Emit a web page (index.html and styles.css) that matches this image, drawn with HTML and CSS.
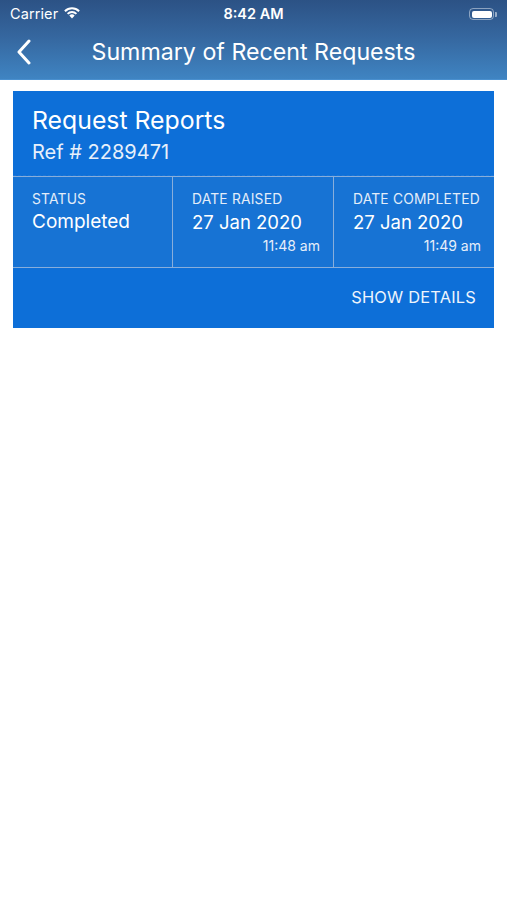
FILE: index.html
```html
<!DOCTYPE html>
<html>
<head>
<meta charset="utf-8">
<link rel="stylesheet" href="styles.css">
</head>
<body>
<header class="topbar">
  <div class="status">
    <div class="carrier">Carrier
      <svg class="wifi" width="18" height="13" viewBox="0 0 18 13"><path d="M9 12.5 L6.3 9.6 A3.8 3.8 0 0 1 11.7 9.6 Z" fill="#fff"/><path d="M3.9 7.2 A7.3 7.3 0 0 1 14.1 7.2 L12.7 8.6 A5.3 5.3 0 0 0 5.3 8.6 Z" fill="#fff"/><path d="M1.2 4.5 A11.2 11.2 0 0 1 16.8 4.5 L15.4 5.9 A9.2 9.2 0 0 0 2.6 5.9 Z" fill="#fff"/></svg>
    </div>
    <div class="time">8:42 AM</div>
    <div class="battery"><span class="batt-body"><span class="batt-fill"></span></span><span class="batt-tip"></span></div>
  </div>
  <div class="nav">
    <svg class="back" width="16" height="26" viewBox="0 0 16 26"><path d="M13 2 L3 13 L13 24" fill="none" stroke="#fff" stroke-width="3" stroke-linecap="round" stroke-linejoin="round"/></svg>
    <h1 class="title">Summary of Recent Requests</h1>
  </div>
</header>
<main class="content">
  <section class="card">
    <div class="card-head">
      <div class="card-title">Request Reports</div>
      <div class="card-ref">Ref # 2289471</div>
    </div>
    <div class="grid">
      <div class="cell">
        <div class="label">STATUS</div>
        <div class="value">Completed</div>
      </div>
      <div class="cell">
        <div class="label">DATE RAISED</div>
        <div class="value date">27 Jan 2020</div>
        <div class="sub">11:48 am</div>
      </div>
      <div class="cell">
        <div class="label">DATE COMPLETED</div>
        <div class="value date">27 Jan 2020</div>
        <div class="sub">11:49 am</div>
      </div>
    </div>
    <div class="card-foot">SHOW DETAILS</div>
  </section>
</main>
</body>
</html>
```
FILE: styles.css
```css
* { box-sizing: border-box; }
html, body { margin: 0; padding: 0; background: #fff; }
body { width: 507px; height: 900px; font-family: Inter, "Liberation Sans", Arial, sans-serif; color: #fff; }
.topbar {
  height: 80px;
  background: linear-gradient(to bottom, #2c5285 0%, #35669e 45%, #3f84c2 100%);
  border-bottom: 1px solid #4a90cf;
}
.status {
  height: 28px;
  display: flex;
  align-items: center;
  justify-content: space-between;
  padding: 0 10px 0 10px;
  position: relative;
}
.carrier { font-size: 14.5px; display: flex; align-items: center; gap: 5px; letter-spacing: 0.1px; margin-top: -1px; }
.wifi { margin-top: -3px; }
.time { font-size: 14.5px; font-weight: 600; position: absolute; left: 0; right: 0; text-align: center; pointer-events: none; margin-top: -1px; }
.battery { display: flex; align-items: center; }
.batt-body { width: 25px; height: 12px; border: 1px solid rgba(255,255,255,0.45); border-radius: 4px; padding: 1.5px; display: flex; }
.batt-fill { flex: 1; background: #fff; border-radius: 2px; }
.batt-tip { width: 2px; height: 5px; background: rgba(255,255,255,0.5); border-radius: 0 1px 1px 0; margin-left: 1px; }
.nav {
  height: 51px;
  display: flex;
  align-items: center;
  padding-left: 16px;
  padding-bottom: 4px;
  position: relative;
}
.title {
  position: absolute; left: 0; right: 0; top: 9px; text-align: center;
  margin: 0; font-weight: 400; font-size: 23.2px; line-height: 30px; letter-spacing: 0;
}
.content { padding: 11px 13px 0 13px; }
.card { background: #0d6fd8; width: 481px; }
.card-head { height: 85px; padding: 14px 19px 0; border-bottom: 1px dashed rgba(255,255,255,0.06); }
.card-title { font-size: 24.8px; line-height: 31px; }
.card-ref { font-size: 20px; line-height: 26px; margin-top: 3px; color: #e7f0fb; }
.grid {
  display: grid;
  grid-template-columns: 160px 161px 160px;
  border-top: 1px solid #88aedb;
  border-bottom: 1px solid #88aedb;
}
.cell {
  height: 90px;
  background: #1773d4;
  padding: 14px 13px 0 19px;
  border-right: 1px solid #88aedb;
  display: flex; flex-direction: column;
}
.cell:last-child { border-right: none; }
.label { font-size: 13.8px; line-height: 16px; color: #e3edf9; letter-spacing: 0.2px; }
.value { font-size: 19px; line-height: 24px; margin-top: 3px; }
.value.date { font-size: 18.5px; }
.sub { font-size: 14px; line-height: 18px; text-align: right; color: #e6eef9; margin-top: 3px; }
.card-foot {
  height: 60px;
  display: flex; align-items: center; justify-content: flex-end;
  padding-right: 18px; padding-bottom: 2px;
  font-size: 16.4px; letter-spacing: 0.2px; color: #eef4fc;
}
```
